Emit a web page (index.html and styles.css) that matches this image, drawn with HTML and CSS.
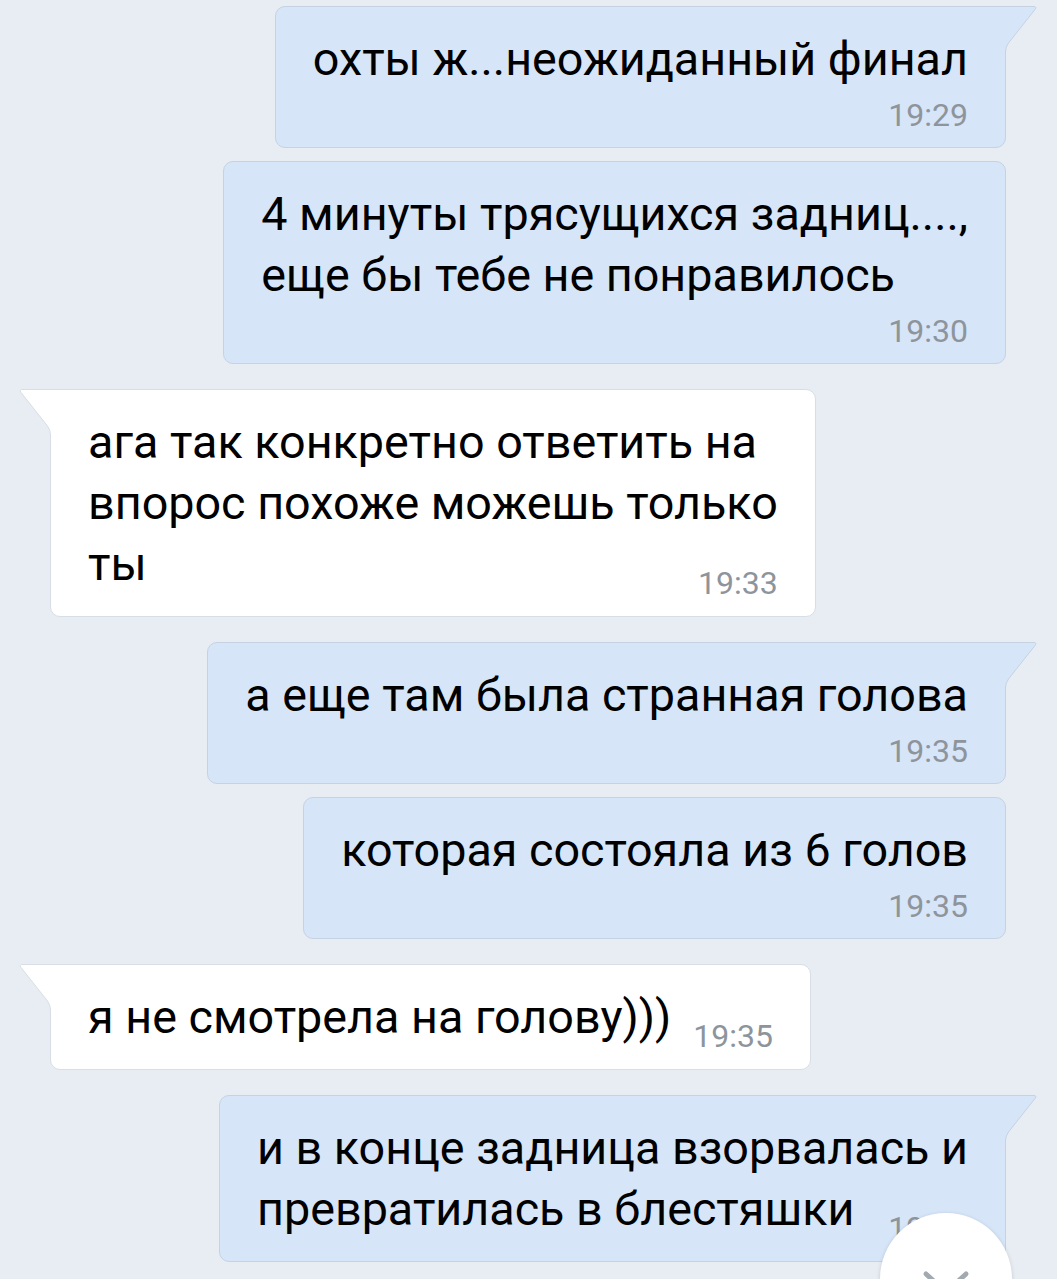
FILE: index.html
```html
<!DOCTYPE html>
<html lang="ru">
  <head>
    <meta charset="UTF-8" />
    <meta name="viewport" content="width=device-width, initial-scale=1.0" />
    <title>Диалог</title>
    <link rel="stylesheet" href="styles.css">
  </head>
  <body>
    <div class="chat">
      <div class="msg out first">
        <svg class="tail" width="32" height="46" viewBox="0 0 32 46"><path class="tail-fill" d="M0 0.5H29Q32 0.5 30 3.5L3.5 37Q0.5 41 0.5 46H0Z"/><path class="tail-line" d="M0 0.5H29Q32 0.5 30 3.5L3.5 37Q0.5 41 0.5 46"/></svg>
        <p class="text">охты ж...неожиданный финал</p>
        <div class="meta"><span class="time">19:29</span></div>
      </div>

      <div class="msg out">
        <p class="text">4 минуты трясущихся задниц....,<br>еще бы тебе не понравилось</p>
        <div class="meta"><span class="time">19:30</span></div>
      </div>

      <div class="msg in first">
        <svg class="tail" width="32" height="46" viewBox="0 0 32 46"><path class="tail-fill" d="M0 0.5H29Q32 0.5 30 3.5L3.5 37Q0.5 41 0.5 46H0Z"/><path class="tail-line" d="M0 0.5H29Q32 0.5 30 3.5L3.5 37Q0.5 41 0.5 46"/></svg>
        <p class="text">ага так конкретно ответить на<br>впорос похоже можешь только</p>
        <div class="last"><span>ты</span><span class="time">19:33</span></div>
      </div>

      <div class="msg out first">
        <svg class="tail" width="32" height="46" viewBox="0 0 32 46"><path class="tail-fill" d="M0 0.5H29Q32 0.5 30 3.5L3.5 37Q0.5 41 0.5 46H0Z"/><path class="tail-line" d="M0 0.5H29Q32 0.5 30 3.5L3.5 37Q0.5 41 0.5 46"/></svg>
        <p class="text">а еще там была странная голова</p>
        <div class="meta"><span class="time">19:35</span></div>
      </div>

      <div class="msg out">
        <p class="text">которая состояла из 6 голов</p>
        <div class="meta"><span class="time">19:35</span></div>
      </div>

      <div class="msg in first">
        <svg class="tail" width="32" height="46" viewBox="0 0 32 46"><path class="tail-fill" d="M0 0.5H29Q32 0.5 30 3.5L3.5 37Q0.5 41 0.5 46H0Z"/><path class="tail-line" d="M0 0.5H29Q32 0.5 30 3.5L3.5 37Q0.5 41 0.5 46"/></svg>
        <div class="last"><span>я не смотрела на голову)))</span><span class="time">19:35</span></div>
      </div>

      <div class="msg out first">
        <svg class="tail" width="32" height="46" viewBox="0 0 32 46"><path class="tail-fill" d="M0 0.5H29Q32 0.5 30 3.5L3.5 37Q0.5 41 0.5 46H0Z"/><path class="tail-line" d="M0 0.5H29Q32 0.5 30 3.5L3.5 37Q0.5 41 0.5 46"/></svg>
        <p class="text">и в конце задница взорвалась и</p>
        <div class="last"><span>превратилась в блестяшки</span><span class="time">19:36</span></div>
      </div>
    </div>

    <!-- scroll down button -->
    <div class="scroll-down">
      <svg width="48" height="28" viewBox="0 0 48 28"><path d="M4 4L24 22L44 4" fill="none" stroke="#a3a9b0" stroke-width="5" stroke-linecap="round" stroke-linejoin="round"/></svg>
    </div>
  </body>
</html>
```

FILE: styles.css
```css
html,
body {
  margin: 0;
  overflow: hidden;
}
body {
  background: #e8edf3;
  font-family: Roboto, "Noto Sans", sans-serif;
  color: #000;
}
.chat {
  display: flex;
  flex-direction: column;
  padding: 6px 51px 20px 50px;
}
.msg {
  position: relative;
  max-width: 900px;
  margin-top: 13px;
  padding: 22px 37px 21px 37px;
  border: 1px solid #c4d2e2;
  border-radius: 10px;
  font-size: 46.7px;
  line-height: 61px;
}
.msg.first {
  margin-top: 25px;
}
.chat .msg:first-child {
  margin-top: 0;
}
.msg.out {
  align-self: flex-end;
  background: #d6e5f7;
}
.msg.in {
  align-self: flex-start;
  background: #fff;
  border-color: #d8dee5;
}
.msg.out.first {
  border-top-right-radius: 0;
}
.msg.in.first {
  border-top-left-radius: 0;
}
.text {
  margin: 0;
  white-space: nowrap;
}
.meta {
  padding-top: 14px;
  text-align: right;
  font-size: 32px;
  line-height: 22px;
}
.time {
  font-size: 32px;
  line-height: 22px;
  color: #8e949b;
}
.last {
  display: flex;
  justify-content: space-between;
  gap: 22px;
  white-space: nowrap;
}
.last .time {
  align-self: flex-end;
  margin-bottom: 1px;
}

/* bubble tails */
.tail {
  position: absolute;
  top: -1px;
}
.out .tail {
  right: -32px;
}
.in .tail {
  left: -32px;
  transform: scaleX(-1);
}
.out .tail-fill {
  fill: #d6e5f7;
}
.in .tail-fill {
  fill: #fff;
}
.tail-line {
  fill: none;
  stroke: #c4d2e2;
  stroke-width: 1;
}
.in .tail-line {
  stroke: #d8dee5;
}

.scroll-down {
  position: fixed;
  right: 45px;
  bottom: -66px;
  width: 132px;
  height: 132px;
  border-radius: 50%;
  background: #fff;
  box-shadow: 0 1px 4px rgba(0, 0, 0, 0.15);
  display: flex;
  justify-content: center;
  align-items: flex-start;
  padding-top: 57px;
  box-sizing: border-box;
}
```
